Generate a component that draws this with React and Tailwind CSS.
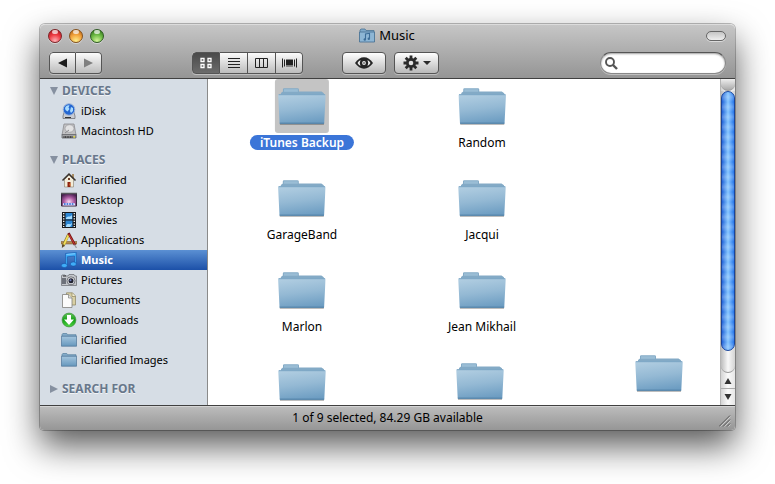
import React, { useState } from "react";

const devices = [
  { id: "idisk", label: "iDisk", icon: IDiskIcon },
  { id: "hd", label: "Macintosh HD", icon: DriveIcon },
];

const places = [
  { id: "home", label: "iClarified", icon: HomeIcon },
  { id: "desktop", label: "Desktop", icon: DesktopIcon },
  { id: "movies", label: "Movies", icon: MoviesIcon },
  { id: "applications", label: "Applications", icon: ApplicationsIcon },
  { id: "music", label: "Music", icon: MusicIcon },
  { id: "pictures", label: "Pictures", icon: PicturesIcon },
  { id: "documents", label: "Documents", icon: DocumentsIcon },
  { id: "downloads", label: "Downloads", icon: DownloadsIcon },
  { id: "folder", label: "iClarified", icon: SmallFolder },
  { id: "images", label: "iClarified Images", icon: SmallFolder },
];

const folders = [
  { id: 1, name: "iTunes Backup", x: 94, y: 0 },
  { id: 2, name: "Random", x: 274, y: 0 },
  { id: 3, name: "GarageBand", x: 94, y: 92 },
  { id: 4, name: "Jacqui", x: 274, y: 92 },
  { id: 5, name: "Marlon", x: 94, y: 184 },
  { id: 6, name: "Jean Mikhail", x: 274, y: 184 },
  { id: 7, name: "", x: 94, y: 276 },
  { id: 8, name: "", x: 272, y: 275 },
  { id: 9, name: "", x: 451, y: 267 },
];

function IDiskIcon() {
  return (
    <svg viewBox="0 0 16 16" className="h-4 w-4">
      <path d="M3.500 8h9l1.500 5v2.500H2V13z" fill="#c9ccd2" stroke="#63666d" strokeWidth=".7" />
      <path d="M4 14.500h6" stroke="#333" />
      <circle cx="8" cy="6.500" r="5.800" fill="#2467d2" stroke="#9fb5d8" strokeWidth="1" />
      <path d="M4 5c1-2.500 3.500-3 4.500-2.500l-1 2 1 1.500-2 2.500L4.500 7zM10 4l2 1v3l-2 2-1-2z" fill="#a9dcff" />
    </svg>
  );
}

function DriveIcon() {
  return (
    <svg viewBox="0 0 16 16" className="h-4 w-4">
      <path d="M3 1h10l2 11H1z" fill="#c2c2c4" stroke="#8b8c8f" strokeWidth=".8" />
      <path d="M1 11.500h14v3.500H1z" fill="#a2a3a6" stroke="#66676b" strokeWidth=".8" />
      <ellipse cx="8.500" cy="5.500" rx="4.500" ry="3.800" fill="#e2e2e3" stroke="#9a9a9d" strokeWidth=".7" />
      <path d="M4 10l4-3" stroke="#8b8b8e" />
      <path d="M2.500 14h9" stroke="#222" strokeDasharray="1 .6" strokeWidth="1.500" />
      <path d="M12.500 13h1.500v1.500h-1.500z" fill="#e9dd31" />
    </svg>
  );
}

function HomeIcon() {
  return (
    <svg viewBox="0 0 16 16" className="h-4 w-4">
      <path d="M11 2h2v4h-2z" fill="#a88d63" />
      <path d="M3.500 7.500L8 3l4.500 4.500V15h-9z" fill="#f2ecd9" stroke="#88806b" strokeWidth=".6" />
      <path d="M1.500 8.500L8 2l6.500 6.500" fill="none" stroke="#39322c" strokeWidth="1.500" />
      <path d="M7 6h2v2H7z" fill="#71412a" />
      <path d="M6.500 10h3v5h-3z" fill="#8d2211" />
      <path d="M8.500 11.500h1v2h-1z" fill="#ec8a28" />
    </svg>
  );
}

function DesktopIcon() {
  return (
    <svg viewBox="0 0 16 16" className="h-4 w-4">
      <defs>
        <radialGradient id="aurora" cx=".5" cy=".65" r=".65">
          <stop offset="0" stopColor="#f9d9f3" />
          <stop offset=".5" stopColor="#b060a6" />
          <stop offset="1" stopColor="#4a2052" />
        </radialGradient>
      </defs>
      <path d="M.5 1.500h15v12.500H.5z" fill="url(#aurora)" stroke="#36263c" />
      <path d="M0 1.500h16" stroke="#55545a" strokeWidth="1.500" />
      <path d="M2.500 11h11l1 2.500h-13z" fill="#dbe8ff" />
      <path d="M3 12h10" stroke="#2455cf" strokeWidth="1.600" strokeDasharray="1.600 1" />
    </svg>
  );
}

function MoviesIcon() {
  return (
    <svg viewBox="0 0 16 16" className="h-4 w-4">
      <path d="M1 0h14v16H1z" fill="#17191d" />
      <path d="M4.500 1h7v6.500h-7zM4.500 8.500h7V15h-7z" fill="#2c86d3" />
      <path d="M5 6c2-3 4 0 6-3v4H5zM5 14c2-4 4 0 6-3v1l-2 3H5z" fill="#a5dcff" />
      <path d="M2.700 1v14M13.300 1v14" stroke="#eee" strokeWidth="1.400" strokeDasharray="1.300 1.300" />
    </svg>
  );
}

function ApplicationsIcon() {
  return (
    <svg viewBox="0 0 16 16" className="h-4 w-4">
      <path d="M0 9.500h16V12H0z" fill="#b48a52" stroke="#6f5229" strokeWidth=".5" />
      <path d="M7.500 2.500L2 14" stroke="#86742c" strokeWidth="2.800" />
      <path d="M7.500 3L3 12.500" stroke="#f3e05a" strokeWidth="1.800" />
      <path d="M.8 16l.4-3.500 2.600 1.300z" fill="#5b482d" />
      <path d="M7.500 1l6.500 12" stroke="#741313" strokeWidth="2.400" />
      <path d="M7.800 2l5.600 10" stroke="#cf3a36" strokeWidth="1" />
      <path d="M13.500 12.500l2 3.500" stroke="#999" strokeWidth="1.200" />
    </svg>
  );
}

function MusicIcon() {
  return (
    <svg viewBox="0 0 16 16" className="h-4 w-4">
      <g fill="#3fadf8" stroke="#12499c" strokeWidth=".5">
        <path d="M4.500 1.500L15.300.3v11.700h-1.800V4L6.300 4.800v8.700H4.500z" />
        <ellipse cx="3.300" cy="13.500" rx="3" ry="2.100" />
        <ellipse cx="12.300" cy="12" rx="3" ry="2.100" />
      </g>
      <path d="M5.500 2.500l8.500-.8" stroke="#8fd2ff" strokeWidth=".8" />
    </svg>
  );
}

function PicturesIcon() {
  return (
    <svg viewBox="0 0 16 16" className="h-4 w-4">
      <path d="M1 3h3l1 1h2l1-1.500h5L14 4h1.500v9.500H.5V4z" fill="#c3c6cb" stroke="#66696e" strokeWidth=".7" />
      <path d="M1 6h4v6H1z" fill="#6d717a" />
      <path d="M2 3.500h3v1H2z" fill="#2c2d30" />
      <circle cx="10" cy="8.800" r="4" fill="#dfe1e5" stroke="#5b5d62" strokeWidth=".8" />
      <circle cx="10" cy="8.800" r="2.500" fill="#202230" />
      <circle cx="9.500" cy="8.200" r="1" fill="#7583bd" />
    </svg>
  );
}

function DocumentsIcon() {
  return (
    <svg viewBox="0 0 16 16" className="h-4 w-4">
      <path d="M5.500.8h6L14.500 4v9h-9z" fill="#d8cfa3" stroke="#8b8360" strokeWidth=".7" />
      <path d="M11 1v3.500h3.500" fill="#f4eed0" stroke="#8b8360" strokeWidth=".7" />
      <path d="M1.500 2.500h6L11 6v9.500H1.500z" fill="#fbfbfb" stroke="#82827d" strokeWidth=".8" />
      <path d="M7.500 2.500V6H11" fill="#e3e3e3" stroke="#82827d" strokeWidth=".7" />
    </svg>
  );
}

function DownloadsIcon() {
  return (
    <svg viewBox="0 0 16 16" className="h-4 w-4">
      <defs>
        <linearGradient id="green" x1="0" y1="0" x2="0" y2="1">
          <stop offset="0" stopColor="#63c35c" />
          <stop offset=".5" stopColor="#15a116" />
          <stop offset="1" stopColor="#52d545" />
        </linearGradient>
      </defs>
      <circle cx="8" cy="8" r="6.900" fill="url(#green)" stroke="#3d8f3b" strokeWidth=".7" />
      <path d="M6 3h4v4.500h3L8 13 3 7.500h3z" fill="#fff" />
    </svg>
  );
}

function SmallFolder() {
  return (
    <svg viewBox="0 0 16 16" className="h-4 w-4">
      <defs>
        <linearGradient id="smallFolder" x1="0" y1="0" x2="0" y2="1">
          <stop offset="0" stopColor="#a5c6de" />
          <stop offset="1" stopColor="#6697bd" />
        </linearGradient>
      </defs>
      <path d="M1 4V2.500L1.800 1.500h4L6.500 2.700H15V5H1z" fill="#83abc9" stroke="#587f9d" strokeWidth=".7" />
      <path d="M.4 4.200h15.200V14.200H.4z" fill="url(#smallFolder)" stroke="#54799a" strokeWidth=".8" />
    </svg>
  );
}

function FolderIcon() {
  return (
    <svg viewBox="0 0 48 38" className="h-[38px] w-12">
      <defs>
        <linearGradient id="folderFront" x1=".3" y1="0" x2=".5" y2="1">
          <stop offset="0" stopColor="#b0cde1" />
          <stop offset=".5" stopColor="#94b9d4" />
          <stop offset="1" stopColor="#6d9dc2" />
        </linearGradient>
      </defs>
      <path d="M2 35.500h44v1.300H2z" fill="#000" opacity=".35" />
      <path d="M3 8V5L5 3.500V1.500q0-1.200 1.200-1.200h13.300q1.500 0 1.500 1.300V3.500h22.500l2.500 1.800V9H3z" fill="#83aac6" />
      <path d="M6 1.200h14v2.600H6z" fill="#9abdd5" />
      <path d="M.3 7.500Q.3 6.200 1.500 6.200h45q1.300 0 1.200 1.300L46.300 35q0 .8-1 .8H2.700q-1 0-1-.8z" fill="url(#folderFront)" />
      <path d="M.8 6.700h46.400" stroke="#6b9abd" strokeWidth=".8" />
      <path d="M1.800 35.200h44.400" stroke="#4a7ba3" strokeWidth="1" />
    </svg>
  );
}

function SideGroup({ title, items, selected, onSelect }) {
  return (
    <section>
      <h2 className="flex h-5 items-center gap-1 pl-2.5 text-xs font-bold text-[#68778b] [text-shadow:0_1px_0_#ffffffb0]">
        <svg viewBox="0 0 8 8" className="h-2 w-2" fill="#8690a0">
          {items.length > 0 ? <path d="M0 0h8L4 8z" /> : <path d="M0 0l8 4-8 4z" />}
        </svg>
        {title}
      </h2>
      {items.map((item) => {
        const Icon = item.icon;
        const active = item.id === selected;
        return (
          <button
            key={item.id}
            onClick={() => onSelect(item.id)}
            className={
              active
                ? "flex h-5 w-full items-center gap-1 bg-linear-to-b from-[#5b90d3] to-[#1c50a8] pl-[21px] text-[11px] font-bold text-white"
                : "flex h-5 w-full items-center gap-1 pl-[21px] text-[11px] text-black"
            }
          >
            <Icon />
            {item.label}
          </button>
        );
      })}
    </section>
  );
}

function WindowButton({ label, className }) {
  return (
    <button
      aria-label={label}
      className={"flex size-3.5 items-start justify-center rounded-full border shadow-[0_1px_0_#ffffff70] " + className}
    >
      <span className="h-1 w-1.5 rounded-full bg-white/70" />
    </button>
  );
}

function ToolButton({ label, className, children }) {
  return (
    <button
      aria-label={label}
      className={"flex h-[22px] items-center justify-center gap-1 border-[#555] " + className}
    >
      {children}
    </button>
  );
}

function ScrollBar() {
  return (
    <div className="flex w-[15px] shrink-0 flex-col border-l border-[#b5b5b5] bg-linear-to-r from-[#d4d4d4] via-[#fafafa] to-[#e6e6e6]">
      <div className="h-3 rounded-b-full border-b border-[#999] bg-linear-to-b from-[#eee] to-[#aaa]" />
      <div className="flex min-h-0 flex-1 flex-col rounded-b-full border-b border-[#999] bg-linear-to-r from-[#bdbdbd] via-[#f8f8f8] to-[#d4d4d4] pb-[21px]">
        <div className="flex-1 rounded-full border border-[#1a469c] bg-linear-to-r from-[#1f5fd6] via-[#86c6ff] to-[#2474ea]">
          <div className="h-full w-full rounded-full bg-[repeating-linear-gradient(to_bottom,#ffffff00_0px,#ffffff38_5px,#ffffff00_10px)]" />
        </div>
      </div>
      <button aria-label="Scroll up" className="flex h-4 items-center justify-center border-b border-[#aaa]">
        <svg viewBox="0 0 8 6" className="h-1.5 w-2" fill="#333">
          <path d="M4 0l3.500 6h-7z" />
        </svg>
      </button>
      <button aria-label="Scroll down" className="flex h-4 items-center justify-center">
        <svg viewBox="0 0 8 6" className="h-1.5 w-2" fill="#333">
          <path d="M4 6L.5 0h7z" />
        </svg>
      </button>
    </div>
  );
}

export default function App() {
  const [place, setPlace] = useState("music");
  const [selectedFolder, setSelectedFolder] = useState(1);
  const [search, setSearch] = useState("");

  return (
    <div className="flex h-screen flex-col bg-white px-10 pt-6 pb-[54px] font-['Noto_Sans',sans-serif]">
      <div className="flex min-h-0 flex-1 flex-col rounded-t-[5px] rounded-b-[4px] shadow-[0_0_0_1px_#00000040,0_16px_34px_#000000a8]">
        {/* Title bar and toolbar */}
        <header className="shrink-0 rounded-t-[5px] border-t border-b border-t-[#dcdcdc] border-b-[#404040] bg-linear-to-b from-[#c6c6c6] to-[#959595] px-[9px]">
          <div className="flex h-[22px] items-center justify-between">
            <div className="-ml-px flex w-16 gap-[7px]">
              <WindowButton
                label="Close"
                className="border-[#7c2226] bg-[radial-gradient(circle_at_50%_90%,#ffb3b8,#ee3b43_50%,#9c0f18)]"
              />
              <WindowButton
                label="Minimize"
                className="border-[#84511c] bg-[radial-gradient(circle_at_50%_90%,#fff08c,#f3a33c_50%,#a9560d)]"
              />
              <WindowButton
                label="Zoom"
                className="border-[#2e5b22] bg-[radial-gradient(circle_at_50%_90%,#d5f79b,#6cb944_50%,#286414)]"
              />
            </div>
            <h1 className="flex items-center gap-1 text-[13px] text-black">
              <svg viewBox="0 0 16 16" className="h-4 w-4">
                <path d="M1 4V2l1-1h4l1 1.500h8V5H1z" fill="#7fa9ca" stroke="#4c7596" strokeWidth=".8" />
                <path d="M.5 4h15v10H.5z" fill="#8db6d5" stroke="#4c7596" strokeWidth=".9" />
                <path d="M6.500 11.500V6l4-.7v5.500" fill="none" stroke="#3d6d98" strokeWidth="1.100" />
                <circle cx="5.800" cy="11.500" r="1.200" fill="#3d6d98" />
                <circle cx="9.800" cy="10.800" r="1.200" fill="#3d6d98" />
              </svg>
              Music
            </h1>
            <div className="flex w-16 justify-end">
              <button aria-label="Toggle toolbar" className="h-2.5 w-5 rounded-full border border-[#666] bg-linear-to-b from-[#c5c5c5] to-[#eee] shadow-[0_1px_0_#ffffff80]" />
            </div>
          </div>

          <div className="flex items-center pt-[5px] pb-1">
            <div className="flex rounded-[4px] bg-linear-to-b from-white to-[#b9b9b9] shadow-[0_1px_0_#ffffff60]">
              <ToolButton label="Back" className="w-[27px] rounded-l-[4px] border">
                <svg viewBox="0 0 9 10" className="h-2.5 w-[9px]" fill="#1c1c1c">
                  <path d="M9 .5v9L0 5z" />
                </svg>
              </ToolButton>
              <ToolButton label="Forward" className="w-[26px] rounded-r-[4px] border border-l-0">
                <svg viewBox="0 0 9 10" className="h-2.5 w-[9px]" fill="#808080">
                  <path d="M0 .5v9L9 5z" />
                </svg>
              </ToolButton>
            </div>

            <div className="ml-[90px] flex rounded-[4px] bg-linear-to-b from-white to-[#b9b9b9] shadow-[0_1px_0_#ffffff60]">
              <ToolButton label="Icon view" className="w-7 rounded-l-[4px] border bg-linear-to-b from-[#4a4a4a] to-[#6c6c6c]">
                <svg viewBox="0 0 12 12" className="size-3" fill="none" stroke="#fff" strokeWidth="1.300">
                  <path d="M1 1.500h3v3H1zM8 1.500h3v3H8zM1 7.500h3v3H1zM8 7.500h3v3H8z" />
                </svg>
              </ToolButton>
              <ToolButton label="List view" className="w-7 border-y border-r">
                <svg viewBox="0 0 12 10" className="h-2.5 w-3" stroke="#222">
                  <path d="M0 .5h12M0 3.500h12M0 6.500h12M0 9.500h12" />
                </svg>
              </ToolButton>
              <ToolButton label="Column view" className="w-7 border-y border-r">
                <svg viewBox="0 0 13 10" className="h-2.5 w-[13px]" fill="none" stroke="#222">
                  <path d="M.5.5h12v9H.5zM4.500.5v9M8.500.5v9" />
                </svg>
              </ToolButton>
              <ToolButton label="Cover Flow" className="w-[27px] rounded-r-[4px] border-y border-r">
                <svg viewBox="0 0 15 10" className="h-2.5 w-[15px]" stroke="#222">
                  <path d="M.5.5v9M2.500 1.500v7M12.500 1.500v7M14.500.5v9" />
                  <path d="M4 1.500h7v6H4z" fill="#222" stroke="none" />
                  <path d="M4 8.500h7" stroke="#888" />
                </svg>
              </ToolButton>
            </div>

            <ToolButton
              label="Quick Look"
              className="ml-[39px] w-11 rounded-[4px] border bg-linear-to-b from-white to-[#b9b9b9] shadow-[0_1px_0_#ffffff60]"
            >
              <svg viewBox="0 0 18 12" className="h-3 w-[18px]">
                <path d="M0 6Q4 .3 9 .3T18 6Q14 11.700 9 11.700T0 6z" fill="#252525" />
                <path d="M2.500 6Q3.500 4 5.500 3q-1.500 3 0 6Q3.500 8 2.500 6zM15.500 6q-1-2-3-3 1.500 3 0 6 2-1 3-3z" fill="#eee" />
                <circle cx="9" cy="6" r="1.900" fill="#eee" />
                <circle cx="9" cy="6" r=".8" fill="#252525" />
              </svg>
            </ToolButton>

            <ToolButton
              label="Action"
              className="ml-2 w-[45px] rounded-[4px] border bg-linear-to-b from-white to-[#b9b9b9] shadow-[0_1px_0_#ffffff60]"
            >
              <svg viewBox="0 0 16 16" className="size-4">
                <g stroke="#2b2b2b" strokeWidth="2.800">
                  <path d="M8 .5v15M.5 8h15M2.700 2.700l10.600 10.600M13.300 2.700L2.700 13.300" />
                </g>
                <circle cx="8" cy="8" r="5" fill="#2b2b2b" />
                <circle cx="8" cy="8" r="2.300" fill="#e2e2e2" />
              </svg>
              <svg viewBox="0 0 8 4" className="h-1 w-2" fill="#2b2b2b">
                <path d="M0 0h8L4 4z" />
              </svg>
            </ToolButton>

            <label className="ml-auto flex h-[22px] w-[126px] items-center gap-1 rounded-full border border-[#888] border-t-[#555] bg-white px-1 shadow-[inset_0_1px_2px_#00000060,0_1px_0_#ffffff60]">
              <svg viewBox="0 0 13 13" className="size-[13px] shrink-0" fill="none" stroke="#555">
                <circle cx="5" cy="5" r="4" strokeWidth="1.900" />
                <path d="M8 8l4 4" strokeWidth="2.400" />
              </svg>
              <input
                type="text"
                aria-label="Search"
                value={search}
                onChange={(e) => setSearch(e.target.value)}
                className="min-w-0 flex-1 bg-transparent text-xs outline-none"
              />
            </label>
          </div>
        </header>

        <div className="flex min-h-0 flex-1">
          {/* Sidebar */}
          <nav className="flex w-42 shrink-0 flex-col gap-[9px] overflow-hidden border-r border-[#8a8a8a] bg-[#d6dde5] pt-0.5">
            <SideGroup title="DEVICES" items={devices} selected={place} onSelect={setPlace} />
            <SideGroup title="PLACES" items={places} selected={place} onSelect={setPlace} />
            <SideGroup title="SEARCH FOR" items={[]} selected={place} onSelect={setPlace} />
          </nav>

          {/* Folders */}
          <main className="relative min-w-0 flex-1 overflow-hidden bg-white">
            {folders.map((folder) => {
              const active = folder.id === selectedFolder;
              return (
                <button
                  key={folder.id}
                  aria-label={folder.name || "Folder"}
                  onClick={() => setSelectedFolder(folder.id)}
                  className="absolute flex -translate-x-1/2 flex-col items-center gap-0.5"
                  style={{ left: folder.x, top: folder.y }}
                >
                  <span className={active ? "rounded-[3px] bg-[#c4c4c4] px-[3px] pt-[9px] pb-[7px]" : "px-[3px] pt-[9px] pb-[7px]"}>
                    <FolderIcon />
                  </span>
                  <span
                    className={
                      active
                        ? "h-[15px] rounded-full bg-[#3b75d8] px-2.5 text-xs leading-[15px] font-semibold whitespace-nowrap text-white"
                        : "h-[15px] px-2.5 text-xs leading-[15px] whitespace-nowrap text-black"
                    }
                  >
                    {folder.name}
                  </span>
                </button>
              );
            })}
          </main>

          <ScrollBar />
        </div>

        {/* Status bar */}
        <footer className="flex h-[25px] shrink-0 items-center justify-between rounded-b-[4px] border-t border-[#404040] bg-linear-to-b from-[#bdbdbd] to-[#969696] px-1 shadow-[inset_0_1px_0_#d5d5d5]">
          <span className="w-3" />
          <p className="text-xs text-black">1 of 9 selected, 84.29 GB available</p>
          <svg viewBox="0 0 12 12" className="mt-1.5 size-3" stroke="#555">
            <path d="M0 11.500L11 .5M4 11.500l7-7M8 11.500l3-3" />
            <path d="M1.500 11.500l10-10M5.500 11.500l6-6M9.500 11.500l2-2" stroke="#ddd" strokeWidth=".7" />
          </svg>
        </footer>
      </div>
    </div>
  );
}
